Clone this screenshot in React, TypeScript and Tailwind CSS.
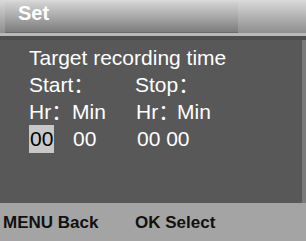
export default function App() {
  return (
    <div
      className="w-[306px] h-[241px] flex flex-col bg-[#585858] overflow-hidden"
      style={{ fontFamily: '"Liberation Sans", Arial, "Noto Sans CJK SC", sans-serif' }}
    >
      {/* title bar */}
      <div className="h-[33px] flex bg-gradient-to-b from-[#dadada] to-[#8e8e8e]">
        <div className="ml-[5px] mt-[2px] w-[233px] h-[31px] bg-gradient-to-b from-[#d2d2d2] via-[#a8a8a8] to-[#7c7c7c] border-b border-[#6a6a6a]">
          <div className="pl-[13px] text-[20px] leading-[23px] font-bold text-white">Set</div>
        </div>
        <div className="flex-1" />
      </div>
      <div className="h-[3px] bg-[#b9b9b9]" />
      <div className="h-[4px] bg-[#4e4e4e]" />

      {/* body */}
      <div className="flex-1 pl-[29px] pt-[4px] text-white text-[21px] leading-[27px] border-r-[4px] border-[#7a7a7a]">
        <div>Target recording time</div>
        <div className="flex">
          <span className="w-[106px]">Start：</span>
          <span>Stop：</span>
        </div>
        <div className="flex">
          <span className="w-[43px]">Hr：</span>
          <span className="w-[64px]">Min</span>
          <span className="w-[41px]">Hr：</span>
          <span>Min</span>
        </div>
        <div className="flex">
          <span className="w-[44px]">
            <span className="inline-block bg-[#c8c8c8] text-black px-px leading-[28px]">00</span>
          </span>
          <span className="w-[64px]">00</span>
          <span>00 00</span>
        </div>
      </div>

      {/* footer */}
      <div className="h-[38px] flex bg-[#a4a4a4] pt-[7px] pl-[3px] text-[17px] font-bold text-[#111]">
        <span className="w-[132px]">MENU Back</span>
        <span>OK Select</span>
      </div>
    </div>
  );
}
